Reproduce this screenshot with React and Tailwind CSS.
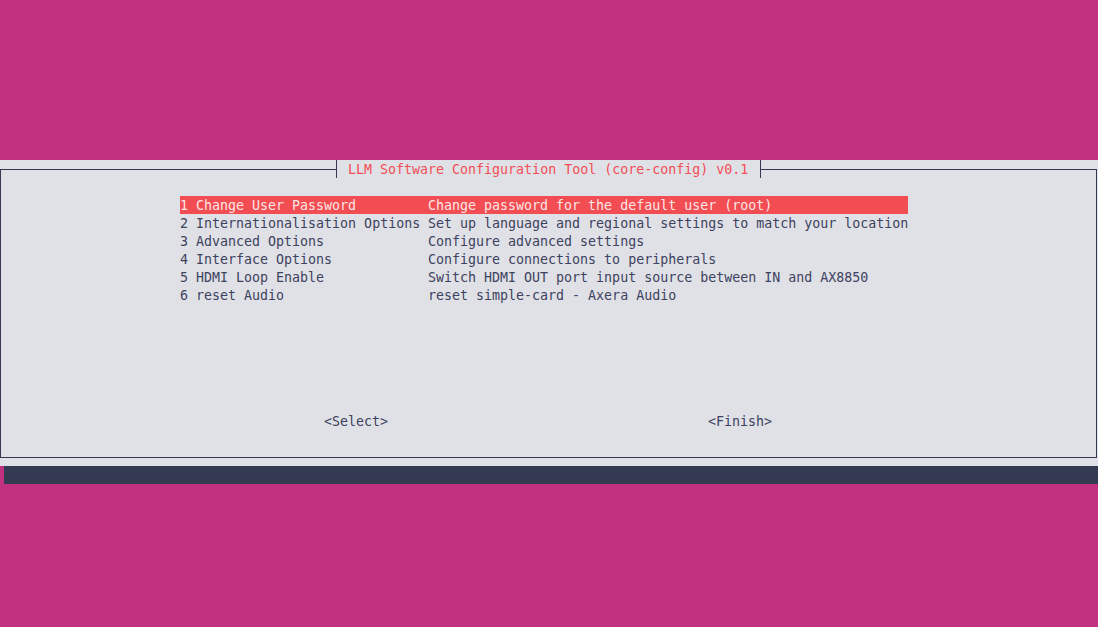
const menu = [
  ["1 Change User Password", "Change password for the default user (root)"],
  ["2 Internationalisation Options", "Set up language and regional settings to match your location"],
  ["3 Advanced Options", "Configure advanced settings"],
  ["4 Interface Options", "Configure connections to peripherals"],
  ["5 HDMI Loop Enable", "Switch HDMI OUT port input source between IN and AX8850"],
  ["6 reset Audio", "reset simple-card - Axera Audio"],
];

export default function App() {
  return (
    <div className="flex h-[627px] w-full flex-col overflow-hidden bg-[#c1317f] font-['DejaVu_Sans_Mono',monospace] text-[13.3px] leading-[20px] text-[#3d4260]">
      <div className="h-[160px] shrink-0" />

      <div className="relative h-[306px] shrink-0 bg-[#e0e1e6]">
        <div className="absolute left-[336px] top-0 z-10 h-[18px] w-[425px] border-x border-[#333a52] bg-[#e0e1e6] pl-[11px] whitespace-pre text-[#f24d55]">
          LLM Software Configuration Tool (core-config) v0.1
        </div>

        <div className="mt-[9px] flex h-[289px] w-[1097px] flex-col border border-[#333a52] pl-[179px] pt-[26px]">
          <div className="flex flex-col">
            {menu.map(([label, desc], i) => (
              <div
                key={label}
                className={`flex h-[18px] w-[728px] whitespace-pre ${i === 0 ? "bg-[#f24d52] text-[#fbe6e6]" : ""}`}
              >
                <span className="w-[248px] shrink-0">{label}</span>
                <span>{desc}</span>
              </div>
            ))}
          </div>

          <div className="mt-[108px] flex h-[18px] whitespace-pre">
            <span className="ml-[144px]">&lt;Select&gt;</span>
            <span className="ml-[320px]">&lt;Finish&gt;</span>
          </div>
        </div>
      </div>

      <div className="ml-[4px] h-[18px] shrink-0 bg-[#333a52]" />
    </div>
  );
}
